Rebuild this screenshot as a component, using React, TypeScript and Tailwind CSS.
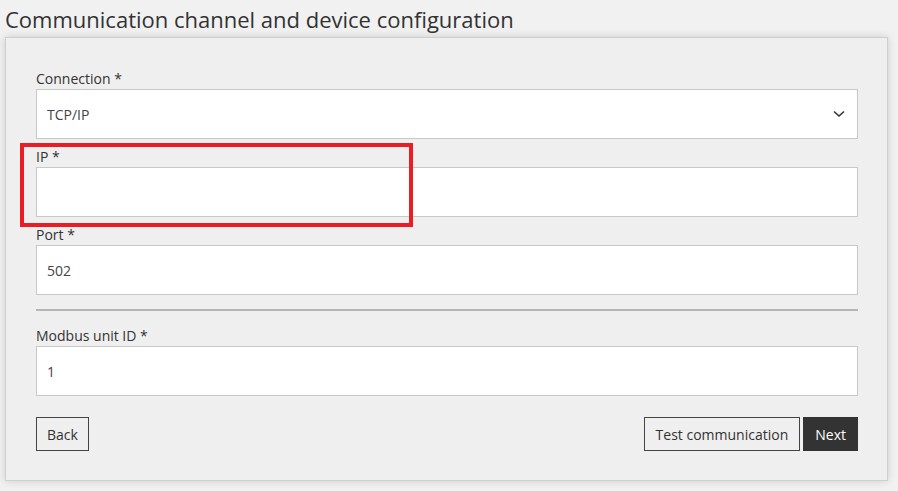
import React from "react";

function Field({ label, value, select }: { label: string; value?: string; select?: boolean }) {
  return (
    <div className="flex flex-col">
      <label className="h-[20px] text-[14px] leading-[20px] text-[#333333]">{label}</label>
      <div className="flex h-[50px] items-center justify-between border border-[#c8c8c8] bg-white pl-[10px] pr-[12px] text-[14px] text-[#444444]">
        <span>{value}</span>
        {select && (
          <svg width="12" height="8" viewBox="0 0 12 8" fill="none">
            <path d="M1 1.5 L6 6 L11 1.5" stroke="#333" strokeWidth="1.6" />
          </svg>
        )}
      </div>
    </div>
  );
}

export default function App() {
  return (
    <div
      className="relative min-h-screen bg-[#f1f1f1] text-[#333333]"
      style={{ fontFamily: '"Open Sans", "Noto Sans", sans-serif' }}
    >
      <h1 className="h-[37px] pl-[5px] pt-[4px] text-[22px] leading-[30px] font-normal text-[#333333]">
        Communication channel and device configuration
      </h1>
      <div className="ml-[5px] w-[883px] border border-[#cfcfcf] bg-[#efefef] pl-[30px] pr-[29px] pt-[31px] pb-[29px] shadow-[0_0_8px_rgba(0,0,0,0.15)]">
        <div className="flex flex-col gap-[8px]">
          <Field label="Connection *" value="TCP/IP" select />
          <Field label="IP *" />
          <Field label="Port *" value="502" />
        </div>
        <div className="mt-[14px] mb-[15px] h-[2px] bg-[#b5b5b5]" />
        <Field label="Modbus unit ID *" value="1" />
        <div className="mt-[21px] flex items-center justify-between">
          <button className="h-[34px] border border-[#444444] px-[10px] text-[14px] text-[#333333]">Back</button>
          <div className="flex gap-[3px]">
            <button className="h-[34px] border border-[#444444] px-[11px] text-[14px] text-[#333333]">
              Test communication
            </button>
            <button className="h-[34px] bg-[#333333] px-[12px] text-[14px] font-normal text-white">Next</button>
          </div>
        </div>
      </div>
      <div className="absolute left-[20px] top-[143px] h-[84px] w-[393px] border-4 border-[#ec1c24]" />
    </div>
  );
}
